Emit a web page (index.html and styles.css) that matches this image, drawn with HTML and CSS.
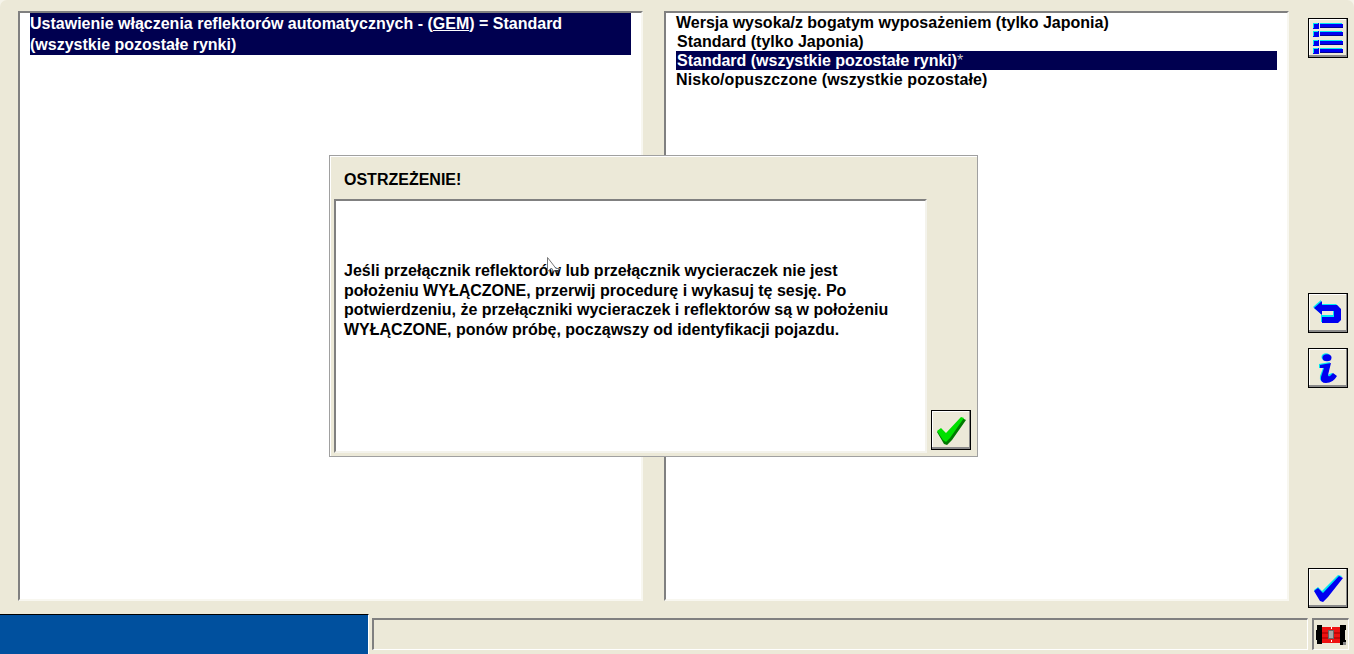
FILE: index.html
```html
<!DOCTYPE html>
<html lang="pl">
<head>
<meta charset="utf-8">
<title>Ustawienia</title>
<link rel="stylesheet" href="styles.css">
</head>
<body>
<main class="main">
  <section class="pane pane-left">
    <div class="sel sel-left">Ustawienie włączenia reflektorów automatycznych - (<u>GEM</u>) = Standard<br>(wszystkie pozostałe rynki)</div>
  </section>
  <section class="pane pane-right">
    <div class="row">Wersja wysoka/z bogatym wyposażeniem (tylko Japonia)</div>
    <div class="row row-in">Standard (tylko Japonia)</div>
    <div class="row row-in sel">Standard (wszystkie pozostałe rynki)<span class="star">*</span></div>
    <div class="row row-wide">Nisko/opuszczone (wszystkie pozostałe)</div>
  </section>
  <aside class="side">
    <button class="btn" type="button" aria-label="Lista">
      <svg viewBox="0 0 38 38" width="38" height="38">
        <g class="ic-dark">
          <rect x="11" y="8" width="23" height="1"/><rect x="11" y="16" width="23" height="1"/><rect x="11" y="25" width="23" height="1"/><rect x="11" y="33" width="23" height="1"/>
        </g>
        <g class="ic-blue">
          <rect x="4" y="4" width="6" height="6"/><rect x="4" y="12" width="6" height="6"/><rect x="4" y="21" width="6" height="6"/><rect x="4" y="29" width="6" height="6"/>
          <rect x="11" y="5" width="23" height="3"/><rect x="11" y="13" width="23" height="3"/><rect x="11" y="22" width="23" height="3"/><rect x="11" y="30" width="23" height="3"/>
        </g>
        <g class="ic-cyan">
          <path d="M4 4h5v1H5v4H4zM4 12h5v1H5v4H4zM4 21h5v1H5v4H4zM4 29h5v1H5v4H4z"/>
          <rect x="11" y="4" width="22" height="1"/><rect x="11" y="12" width="22" height="1"/><rect x="11" y="21" width="22" height="1"/><rect x="11" y="29" width="22" height="1"/>
        </g>
      </svg>
    </button>
    <button class="btn btn-back" type="button" aria-label="Wstecz">
      <svg viewBox="0 0 38 38" width="38" height="38">
        <path class="ic-cyan" d="M4 13L12 6V10H27L30 13V25L28 28H12V21H24V16H12V20Z"/>
        <path class="ic-blue" d="M5 14L13 7V11H28L32 15V26L29 29H13V23H25V17H13V21Z"/>
      </svg>
    </button>
    <button class="btn btn-info" type="button" aria-label="Informacja">
      <svg viewBox="0 0 38 38" width="38" height="38">
        <ellipse class="ic-cyan" cx="17" cy="8" rx="4.5" ry="3.8"/>
        <ellipse class="ic-blue" cx="18" cy="8.7" rx="4.5" ry="3.5"/>
        <path class="ic-cyan" d="M10 15L21 13L18 26L23 24L27 27Q23 33 16 33Q10 33 11 27L14 19L10 19Z"/>
        <path class="ic-blue" d="M11 16L22 14L19 26Q19 28 21 27L24 24L28 27Q24 34 17 34Q11 34 12 28L15 19L11 19Z"/>
      </svg>
    </button>
    <button class="btn btn-ok" type="button" aria-label="OK">
      <svg viewBox="0 0 38 38" width="38" height="38">
        <polygon class="ic-cyan" points="5,21 9,18 13,22 29,6 33,7 17,26 12,30"/>
        <polygon class="ic-blue" points="5,22 9,19 14,24 30,7 34,9 19,28 14,33 11,32"/>
      </svg>
    </button>
  </aside>
</main>
<footer class="foot">
  <div class="foot-blue"></div>
  <div class="foot-status"></div>
  <div class="foot-car">
    <svg viewBox="0 0 30 20" width="30" height="20" aria-hidden="true">
      <path d="M1 0H6V19H1V15H0V5H1ZM24 0H30V5H29V15H30V20H24Z" fill="#000"/>
      <path d="M6 2H24V18H6Z" fill="#ee1111"/>
      <path d="M6 8H24M6 13H24" stroke="#900" stroke-width="1"/>
      <rect x="12.5" y="5.5" width="5" height="8" fill="#a8a8a8" stroke="#666"/>
      <rect x="15" y="2" width="1" height="2" fill="#fff"/><rect x="15" y="15" width="1" height="2" fill="#fff"/>
      <rect x="27" y="17" width="3" height="3" fill="#888"/>
    </svg>
  </div>
</footer>
<div class="dialog" role="dialog">
  <h2 class="dlg-title">OSTRZEŻENIE!</h2>
  <div class="dlg-body">
    <p class="dlg-text">Jeśli przełącznik reflektorów lub przełącznik wycieraczek nie jest<br>położeniu WYŁĄCZONE, przerwij procedurę i wykasuj tę sesję. Po<br>potwierdzeniu, że przełączniki wycieraczek i reflektorów są w położeniu<br>WYŁĄCZONE, ponów próbę, począwszy od identyfikacji pojazdu.</p>
    <button class="btn btn-dlg" type="button" aria-label="OK">
      <svg viewBox="0 0 38 38" width="38" height="38">
        <polygon fill="#007a00" points="5,21 9,18 15,24 30,7 34,9 20,29 15,34 12,33"/>
        <polygon fill="#00e000" points="5,20 9,17 14,22 29,6 32,7 18,27 14,31 11,29"/>
      </svg>
    </button>
  </div>
</div>
<svg class="cursor" viewBox="0 0 14 18" width="14" height="18" aria-hidden="true">
  <path d="M0.5 0.5V14.5L4 11.5H5L6 14H11V13L13 11.5H9L4 5Z" fill="#fff" stroke="#777" stroke-width="1"/>
  <path d="M7 13H12L9.5 16Z" fill="#333"/>
</svg>
</body>
</html>
```
FILE: styles.css
```css
* { box-sizing: border-box; }
html { margin: 0; height: 100%; background: #f6f4ea; }
body {
  margin: 0;
  position: relative;
  width: 1354px;
  height: 654px;
  overflow: hidden;
  background: #ece9d8;
  border-radius: 7px 7px 0 0;
  font: bold 16px/19px "Liberation Sans", Arial, sans-serif;
  color: #000;
  display: flex;
  flex-direction: column;
}
.main {
  height: 614px;
  display: flex;
  padding: 11px 0 13px 18px;
}
.pane {
  width: 625px;
  height: 590px;
  background: #fff;
  border: 2px solid;
  border-color: #808080 #f8f7f0 #f8f7f0 #808080;
  padding: 0 10px;
}
.pane-right { margin-left: 21px; }
.sel { background: #000050; color: #fff; }
.sel-left { line-height: 21px; }
.row { height: 19px; }
.row-in { padding-left: 1px; }
.row-wide { letter-spacing: 0.1px; }
.star { font-weight: normal; color: #ccc; }
.side {
  width: 65px;
  padding: 7px 0 0 19px;
  display: flex;
  flex-direction: column;
  height: 597px;
}
.btn {
  width: 40px;
  height: 40px;
  padding: 0;
  display: flex;
  align-items: center;
  justify-content: center;
  background: #ece9d8;
  border: 1px solid #000;
  box-shadow: inset -1px -2px 0 #8a8a8a, inset 1px 1px 0 #fff;
  flex: none;
}
.btn svg { display: block; }
.btn-back { margin-top: 235px; }
.btn-info { margin-top: 15px; }
.btn-ok { margin-top: 180px; }
.ic-blue { fill: #0000f0; }
.ic-cyan { fill: #00e8f0; }
.ic-dark { fill: #000090; }
.foot {
  height: 40px;
  display: flex;
}
.foot-blue {
  width: 369px;
  background: #00509e;
  border-top: 1px solid #000;
  border-right: 1px solid #fff;
}
.foot-status, .foot-car {
  margin-top: 4px;
  height: 32px;
  border-style: solid;
  border-width: 2px 1px 1px 2px;
  border-color: #808080 #fff #fff #808080;
}
.foot-status { width: 936px; margin-left: 3px; }
.foot-car {
  width: 37px;
  margin-left: 4px;
  display: flex;
  align-items: center;
  justify-content: center;
}
.dialog {
  position: absolute;
  left: 329px;
  top: 155px;
  width: 649px;
  height: 302px;
  background: #ece9d8;
  border: 1px solid #a0a0a0;
  box-shadow: inset 1px 1px 0 #fff;
  padding: 0 6px 0 4px;
  display: flex;
  flex-direction: column;
}
.dlg-title {
  margin: 0;
  height: 43px;
  padding: 14px 0 0 10px;
  font-size: 16px;
  line-height: 19px;
}
.dlg-body { display: flex; align-items: flex-end; gap: 4px; }
.dlg-text {
  margin: 0;
  width: 593px;
  height: 254px;
  background: #fff;
  border: 2px solid;
  border-color: #808080 #f4f3ec #f4f3ec #808080;
  padding: 60px 0 0 8px;
  line-height: 19.5px;
}
.btn-dlg { margin-bottom: 3px; }
.cursor { position: absolute; left: 547px; top: 257px; }
```
